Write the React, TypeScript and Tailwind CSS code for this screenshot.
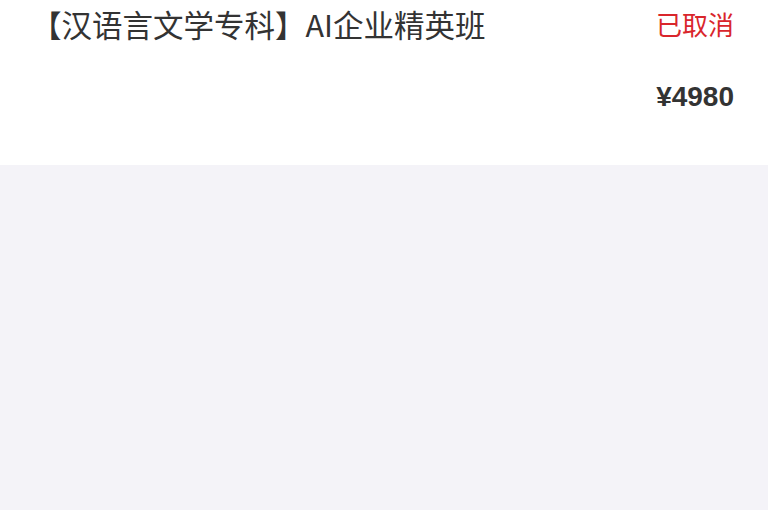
import * as React from "react";

const font = {fontFamily: '"Noto Sans CJK SC", "Noto Sans", sans-serif'};

const App = () => {
    return (
        <div className="min-h-[510px] w-[768px] bg-[#f4f3f8]" style={font}>
            <div className="h-[165px] bg-white pl-[31px] pr-[34px] pt-[4px]">
                <div className="flex items-start justify-between">
                    <h2 className="text-[30.5px] leading-[40px] text-[#333333]">【汉语言文学专科】AI企业精英班</h2>
                    <span className="text-[26px] leading-[40px] text-[#d9262c]">已取消</span>
                </div>
                <div className="mt-[35px] flex justify-end">
                    <span className="text-[28px] leading-[36px] font-bold text-[#333333]" style={{fontFamily: '"Liberation Sans", sans-serif'}}>¥4980</span>
                </div>
            </div>
        </div>
    );
};

export default App;
